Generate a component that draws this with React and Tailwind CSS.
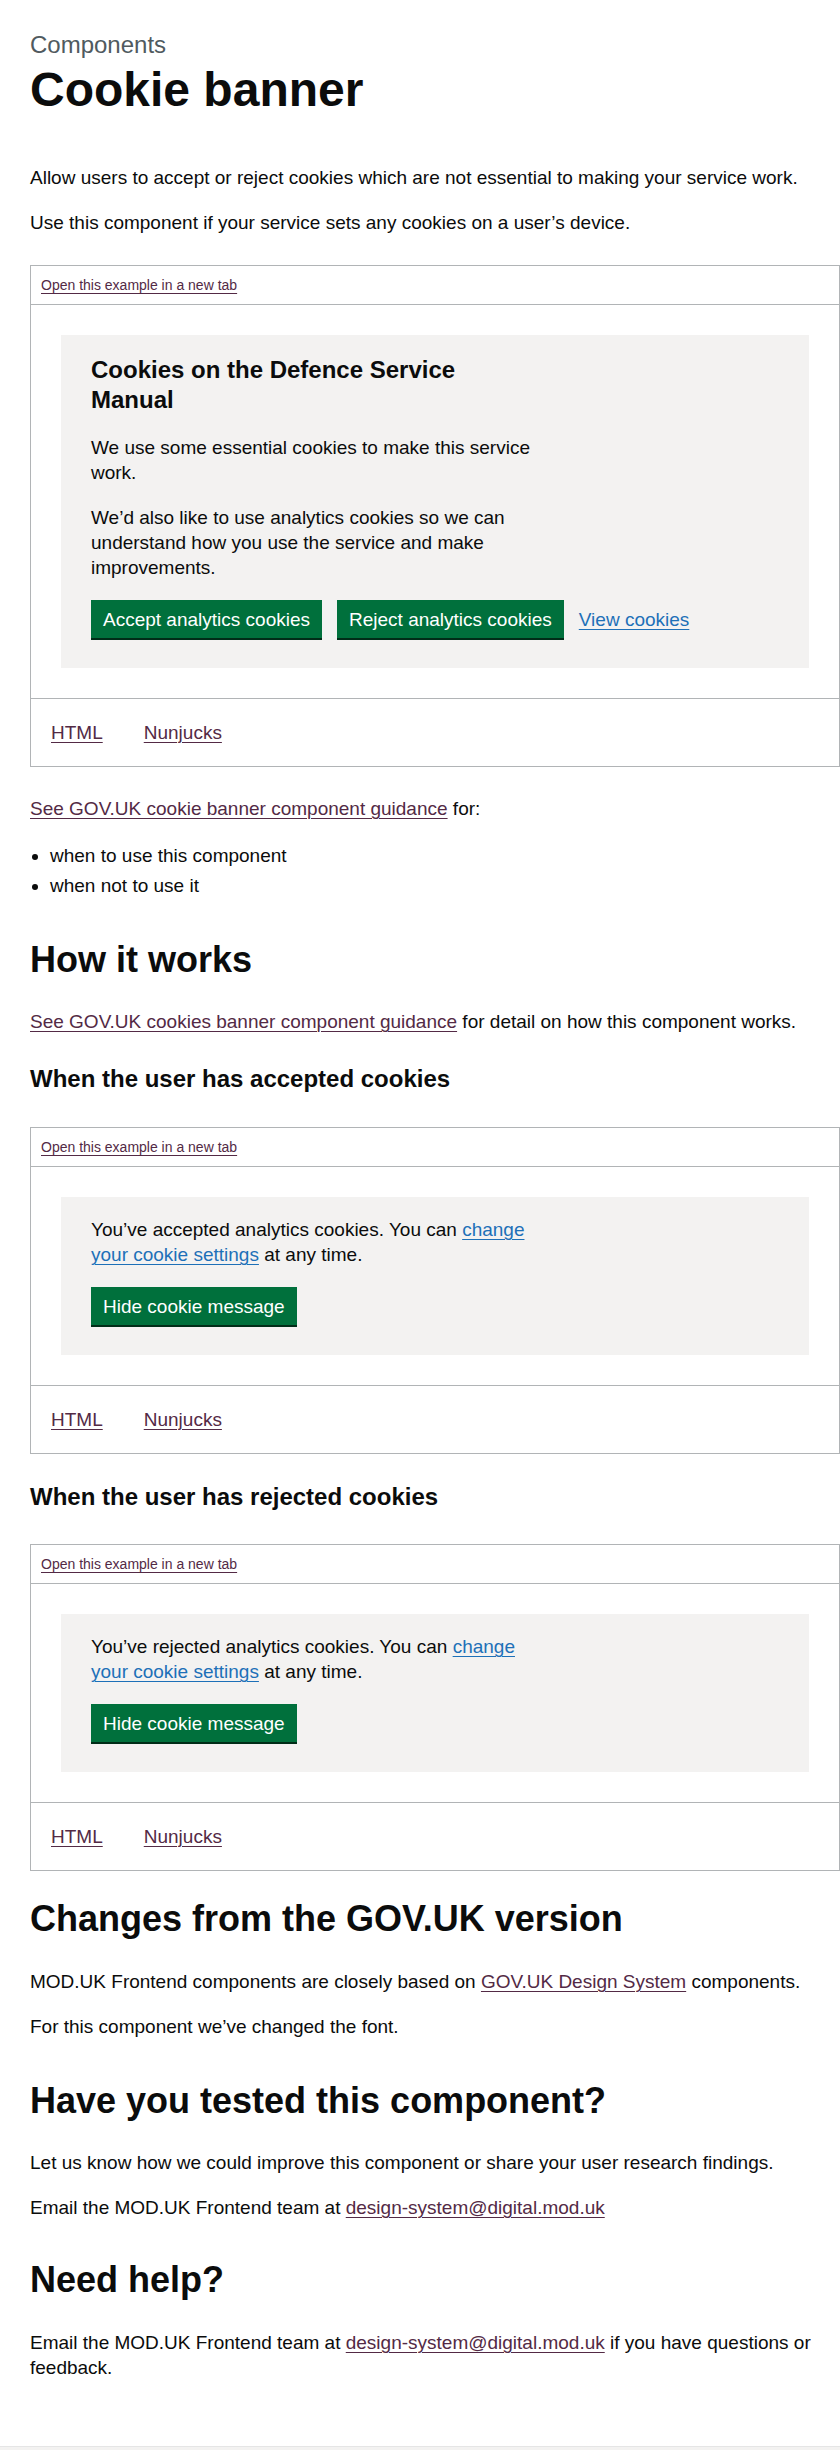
import React from 'react';

const link = 'text-[#532a45] underline decoration-1 underline-offset-[3px]';
const blueLink = 'text-[#1d70b8] underline decoration-1 underline-offset-[3px]';
const body = 'text-[19px] leading-[25px]';

function GreenButton({ children }) {
  return (
    <button
      type="button"
      className="bg-[#00703c] text-white text-[19px] leading-[19px] pt-[8px] pb-[7px] px-[10px] border-2 border-transparent shadow-[0_2px_0_#002d18] cursor-pointer"
    >
      {children}
    </button>
  );
}

// ── Example frame: toolbar, preview, code tabs ──
function Example({ children, className = '' }) {
  return (
    <div className={`border border-[#b1b4b6] ${className}`}>
      <div className="p-[10px] border-b border-[#b1b4b6] text-[14px] leading-[18px]">
        <a href="#" className={link}>Open this example in a new tab</a>
      </div>
      <div className="p-[30px]">
        <div className="bg-[#f3f2f1] px-[30px] pt-[20px] pb-[30px]">{children}</div>
      </div>
      <div className={`border-t border-[#b1b4b6] pl-[20px] pt-[21px] pb-[21px] flex gap-[41px] ${body}`}>
        <a href="#" className={link}>HTML</a>
        <a href="#" className={link}>Nunjucks</a>
      </div>
    </div>
  );
}

function ConfirmBanner({ action }) {
  return (
    <>
      <p className={`${body} mb-[20px] max-w-[449px]`}>
        You’ve {action} analytics cookies. You can{' '}
        <a href="#" className={blueLink}>change your cookie settings</a> at any time.
      </p>
      <div className="flex">
        <GreenButton>Hide cookie message</GreenButton>
      </div>
    </>
  );
}

export default function App() {
  return (
    <div className="min-h-screen bg-white text-[#0b0c0c] font-['Liberation_Sans',Arial,sans-serif]">
      <main className="pl-[30px] pt-[30px] w-[840px]">
        <div className="w-[810px]">
          <span className="block text-[24px] leading-[30px] text-[#505a5f] mb-[5px]">Components</span>
          <h1 className="text-[48px] leading-[50px] font-bold mb-[50px]">Cookie banner</h1>

          <p className={`${body} mb-[20px]`}>
            Allow users to accept or reject cookies which are not essential to making your service work.
          </p>
          <p className={`${body} mb-[30px]`}>
            Use this component if your service sets any cookies on a user’s device.
          </p>

          <Example className="mb-[29px]">
            <div className="max-w-[449px]">
              <h2 className="text-[24px] leading-[30px] font-bold mb-[20px]">
                Cookies on the Defence Service Manual
              </h2>
              <p className={`${body} mb-[20px]`}>We use some essential cookies to make this service work.</p>
              <p className={`${body} mb-[20px]`}>
                We’d also like to use analytics cookies so we can understand how you use the service and make improvements.
              </p>
            </div>
            <div className="flex items-baseline gap-[15px]">
              <GreenButton>Accept analytics cookies</GreenButton>
              <GreenButton>Reject analytics cookies</GreenButton>
              <a href="#" className={`${blueLink} ${body}`}>View cookies</a>
            </div>
          </Example>

          <p className={`${body} mb-[22px]`}>
            <a href="#" className={link}>See GOV.UK cookie banner component guidance</a> for:
          </p>
          <ul className={`list-disc pl-[20px] mb-[42px] ${body}`}>
            <li className="mb-[5px]">when to use this component</li>
            <li>when not to use it</li>
          </ul>

          <h2 className="text-[36px] leading-[40px] font-bold mb-[29px]">How it works</h2>
          <p className={`${body} mb-[30px]`}>
            <a href="#" className={link}>See GOV.UK cookies banner component guidance</a> for detail on how this component works.
          </p>

          <h3 className="text-[24px] leading-[30px] font-bold mb-[33px]">When the user has accepted cookies</h3>
          <Example className="mb-[28px]">
            <ConfirmBanner action="accepted" />
          </Example>

          <h3 className="text-[24px] leading-[30px] font-bold mb-[32px]">When the user has rejected cookies</h3>
          <Example className="mb-[28px]">
            <ConfirmBanner action="rejected" />
          </Example>

          <h2 className="text-[36px] leading-[40px] font-bold mb-[30px]">Changes from the GOV.UK version</h2>
          <p className={`${body} mb-[20px]`}>
            MOD.UK Frontend components are closely based on{' '}
            <a href="#" className={link}>GOV.UK Design System</a> components.
          </p>
          <p className={`${body} mb-[42px]`}>For this component we’ve changed the font.</p>

          <h2 className="text-[36px] leading-[40px] font-bold mb-[29px]">Have you tested this component?</h2>
          <p className={`${body} mb-[20px]`}>
            Let us know how we could improve this component or share your user research findings.
          </p>
          <p className={`${body} mb-[40px]`}>
            Email the MOD.UK Frontend team at{' '}
            <a href="#" className={link}>design-system@digital.mod.uk</a>
          </p>

          <h2 className="text-[36px] leading-[40px] font-bold mb-[30px]">Need help?</h2>
          <p className={`${body} mb-[66px]`}>
            Email the MOD.UK Frontend team at{' '}
            <a href="#" className={link}>design-system@digital.mod.uk</a> if you have questions or feedback.
          </p>
        </div>
      </main>
      <footer className="h-[80px] bg-[#f3f2f1] border-t border-[#e5e5e5]" />
    </div>
  );
}
